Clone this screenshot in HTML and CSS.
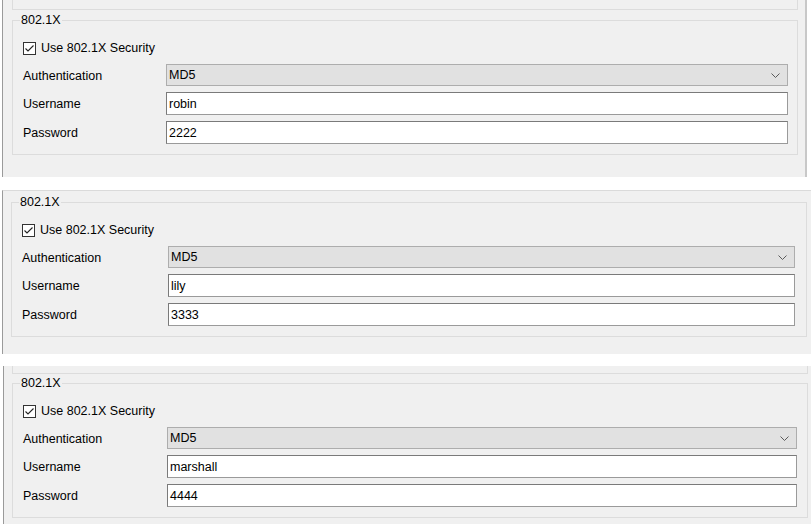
FILE: index.html
```html
<!DOCTYPE html>
<html>
<head>
<meta charset="utf-8">
<link rel="stylesheet" href="styles.css">
</head>
<body>
<div class="page">
  <section class="shot shot-1">
    <div class="stub"></div>
    <fieldset class="group">
      <legend>802.1X</legend>
      <label class="check-row">
        <span class="box"><svg viewBox="0 0 13 13" width="13" height="13"><polyline points="2.5,6.5 5,9 10.5,3.5" fill="none" stroke="#222" stroke-width="1.1"/></svg></span>
        <span>Use 802.1X Security</span>
      </label>
      <div class="row row-auth">
        <span class="lbl">Authentication</span>
        <div class="select"><span>MD5</span><svg class="chev" viewBox="0 0 9 5" width="9" height="5"><polyline points="0.5,0.5 4.5,4.5 8.5,0.5" fill="none" stroke="#5a5a5a" stroke-width="1"/></svg></div>
      </div>
      <div class="row">
        <span class="lbl">Username</span>
        <div class="input">robin</div>
      </div>
      <div class="row">
        <span class="lbl">Password</span>
        <div class="input">2222</div>
      </div>
    </fieldset>
  </section>

  <section class="shot shot-2">
    <fieldset class="group">
      <legend>802.1X</legend>
      <label class="check-row">
        <span class="box"><svg viewBox="0 0 13 13" width="13" height="13"><polyline points="2.5,6.5 5,9 10.5,3.5" fill="none" stroke="#222" stroke-width="1.1"/></svg></span>
        <span>Use 802.1X Security</span>
      </label>
      <div class="row row-auth">
        <span class="lbl">Authentication</span>
        <div class="select"><span>MD5</span><svg class="chev" viewBox="0 0 9 5" width="9" height="5"><polyline points="0.5,0.5 4.5,4.5 8.5,0.5" fill="none" stroke="#5a5a5a" stroke-width="1"/></svg></div>
      </div>
      <div class="row">
        <span class="lbl">Username</span>
        <div class="input">lily</div>
      </div>
      <div class="row">
        <span class="lbl">Password</span>
        <div class="input">3333</div>
      </div>
    </fieldset>
  </section>

  <section class="shot shot-3">
    <div class="stub"></div>
    <fieldset class="group">
      <legend>802.1X</legend>
      <label class="check-row">
        <span class="box"><svg viewBox="0 0 13 13" width="13" height="13"><polyline points="2.5,6.5 5,9 10.5,3.5" fill="none" stroke="#222" stroke-width="1.1"/></svg></span>
        <span>Use 802.1X Security</span>
      </label>
      <div class="row row-auth">
        <span class="lbl">Authentication</span>
        <div class="select"><span>MD5</span><svg class="chev" viewBox="0 0 9 5" width="9" height="5"><polyline points="0.5,0.5 4.5,4.5 8.5,0.5" fill="none" stroke="#5a5a5a" stroke-width="1"/></svg></div>
      </div>
      <div class="row">
        <span class="lbl">Username</span>
        <div class="input">marshall</div>
      </div>
      <div class="row">
        <span class="lbl">Password</span>
        <div class="input">4444</div>
      </div>
    </fieldset>
  </section>
</div>
</body>
</html>
```

FILE: styles.css
```css
html, body {
  margin: 0;
  padding: 0;
  background: #ffffff;
  overflow: hidden;
}

body {
  width: 811px;
  height: 524px;
  font-family: "Liberation Sans", Arial, sans-serif;
  font-size: 12.5px;
  color: #000;
}

.page {
  display: flex;
  flex-direction: column;
}

.shot {
  background: #f0f0f0;
  border-left: 1px solid #9a9a9a;
  box-sizing: border-box;
  display: flex;
  flex-direction: column;
  align-items: flex-start;
}

.shot-1 {
  margin-left: 2px;
  width: 805px;
  height: 177px;
  border-right: 2px solid #c8c8c8;
  padding-left: 9px;
  --group-w: 786px;
  --label-w: 143px;
  --pad-l: 10px;
  --pad-r: 9px;
}

.shot-2 {
  margin-top: 13px;
  margin-left: 2px;
  width: 809px;
  height: 164px;
  border-top: 1px solid #dadada;
  padding-left: 8px;
  padding-top: 4px;
  --group-w: 796px;
  --label-w: 146px;
  --pad-l: 10px;
  --pad-r: 11px;
}

.shot-3 {
  margin-top: 12px;
  margin-left: 3px;
  width: 808px;
  height: 158px;
  padding-left: 8px;
  --group-w: 796px;
  --label-w: 144px;
  --pad-l: 10px;
  --pad-r: 10px;
}

.stub {
  width: var(--group-w);
  box-sizing: border-box;
  border: 1px solid #dcdcdc;
  border-top: none;
  height: 8px;
  margin-bottom: 2px;
}

.shot-1 .stub {
  height: 10px;
  margin-bottom: 3px;
}

.shot-3 .stub {
  height: 8px;
  margin-bottom: 2px;
}

.group {
  width: var(--group-w);
  box-sizing: border-box;
  margin: 0;
  border: 1px solid #dcdcdc;
  padding: 14px var(--pad-r) 10px var(--pad-l);
  display: flex;
  flex-direction: column;
}

.group legend {
  margin-left: -3px;
  padding: 0 1px;
  line-height: 14px;
  font-size: 12.5px;
}

.check-row {
  display: flex;
  align-items: center;
  gap: 5px;
  height: 14px;
  margin-bottom: 9px;
}

.box {
  width: 13px;
  height: 13px;
  box-sizing: border-box;
  border: 1px solid #333;
  background: #fff;
  display: flex;
}

.box svg {
  margin: -1px;
}

.row {
  display: grid;
  grid-template-columns: var(--label-w) 1fr;
  align-items: center;
  height: 23px;
  margin-bottom: 6px;
}

.row:last-child {
  margin-bottom: 0;
}

.row-auth {
  height: 22px;
}

.lbl {
  padding-top: 1px;
}

.select {
  height: 22px;
  box-sizing: border-box;
  background: #e1e1e1;
  border: 1px solid #adadad;
  display: flex;
  align-items: center;
  justify-content: space-between;
  padding: 0 7px 0 2px;
}

.chev {
  display: block;
}

.input {
  height: 23px;
  box-sizing: border-box;
  background: #fff;
  border: 1px solid #7a7a7a;
  border-right-color: #9a9a9a;
  border-bottom-color: #9a9a9a;
  display: flex;
  align-items: center;
  padding-left: 2px;
}
```
